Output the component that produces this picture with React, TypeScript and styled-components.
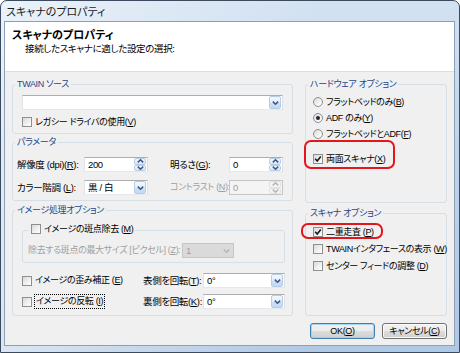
import React from 'react'
import styled, { createGlobalStyle } from 'styled-components'

const GlobalStyle = createGlobalStyle`
	html, body {
		margin: 0;
		padding: 0;
		background: #fff;
	}
	body {
		font-family: "Liberation Sans", "Noto Sans CJK JP", sans-serif;
		font-size: 9px;
		font-feature-settings: "palt";
		letter-spacing: -0.35px;
		color: #000;
	}
	* {
		box-sizing: border-box;
	}
`

// Window chrome
const Window = styled.div`
	width: 460px;
	height: 353px;
	display: flex;
	flex-direction: column;
	padding: 0 4px 6px 3px;
	border: 1px solid #3b4a5c;
	border-radius: 7px 7px 0 0;
	background:
		linear-gradient(90deg, rgba(255, 255, 255, 0.55) 0%, rgba(255, 255, 255, 0.25) 35%, rgba(255, 255, 255, 0) 70%),
		linear-gradient(180deg, #d3e2f2 0%, #c0d5ec 40%, #afc8e4 100%);
`

const TitleBar = styled.div`
	height: 20px;
	display: flex;
	align-items: center;
	padding-left: 2px;
	font-size: 11px;
	letter-spacing: 0;
	color: #1b1b1b;
`

const Client = styled.div`
	flex: 1;
	display: flex;
	flex-direction: column;
	border: 1px solid #8b9fb6;
	background: #f0f0f0;
`

const Header = styled.div`
	height: 50px;
	background: #fff;
	border-bottom: 1px solid #d9dfe6;
	padding: 6px 0 0 7px;
`

const HeaderTitle = styled.div`
	font-size: 11px;
	line-height: 14px;
	font-weight: 700;
	letter-spacing: 0;
`

const HeaderSub = styled.div`
	font-size: 9.5px;
	line-height: 13px;
	padding-left: 13px;
`

const Body = styled.div`
	display: flex;
	gap: 12px;
	padding: 6px 7px 0 7px;
`

const Column = styled.div<{ $w: number }>`
	width: ${p => p.$w}px;
	display: flex;
	flex-direction: column;
`

// Group boxes
const Group = styled.fieldset<{ $h: number; $mt?: number; $ml?: number; $w?: number }>`
	margin: ${p => p.$mt ?? 0}px 0 0 ${p => p.$ml ?? 0}px;
	padding: 0;
	min-width: 0;
	width: ${p => (p.$w ? `${p.$w}px` : 'auto')};
	height: ${p => p.$h}px;
	border: 1px solid #d5dfe5;
	border-radius: 3px;
`

const Caption = styled.legend<{ $ml?: number }>`
	margin-left: ${p => p.$ml ?? 2}px;
	padding: 0 2px;
	font-size: 9px;
	line-height: 13px;
	color: #26468a;
`

// Controls
const Field = styled.div<{ $w?: number; $disabled?: boolean; $fill?: boolean; $ml?: number; $mt?: number }>`
	display: flex;
	align-items: stretch;
	width: ${p => (p.$w ? `${p.$w}px` : '100%')};
	height: 15px;
	margin: ${p => p.$mt ?? 0}px 0 0 ${p => p.$ml ?? 0}px;
	border: 1px solid;
	border-color: ${p => (p.$disabled ? '#c5c5c5' : '#abadb3 #dbdfe6 #e3e9ef #e2e3ea')};
	background: ${p => (p.$fill ? '#dadada' : p.$disabled ? '#f4f4f4' : '#fff')};
	color: ${p => (p.$disabled ? '#a0a0a0' : '#000')};
`

const FieldText = styled.span`
	flex: 1;
	padding-left: 3px;
	font-size: 9.5px;
	line-height: 13px;
	white-space: nowrap;
	overflow: hidden;
`

const DropButton = styled.span<{ $disabled?: boolean }>`
	width: 12px;
	margin: 0 1px 0 0;
	display: flex;
	align-items: center;
	justify-content: center;
	border: 1px solid ${p => (p.$disabled ? 'transparent' : '#b7cde6')};
	border-radius: 2px;
	background: ${p => (p.$disabled ? 'transparent' : 'linear-gradient(180deg, #f4f8fd 0%, #e2edf9 50%, #cfe0f3 51%, #c4d9f0 100%)')};
`

const SpinBox = styled.span`
	width: 12px;
	margin-right: 1px;
	display: flex;
	flex-direction: column;
`

const SpinHalf = styled.span<{ $disabled?: boolean }>`
	flex: 1;
	display: flex;
	align-items: center;
	justify-content: center;
	border: 1px solid ${p => (p.$disabled ? '#e2e2e2' : '#b7cde6')};
	border-radius: 2px;
	background: ${p => (p.$disabled ? '#f4f4f4' : 'linear-gradient(180deg, #f4f8fd 0%, #d6e5f5 100%)')};
`

const Chevron = ({ up, disabled }: { up?: boolean; disabled?: boolean }) => (
	<svg width="7" height="4" viewBox="0 0 7 4">
		<path
			d={up ? 'M0.8 3.4 L3.5 0.8 L6.2 3.4' : 'M0.8 0.6 L3.5 3.2 L6.2 0.6'}
			fill="none"
			stroke={disabled ? '#b5b5b5' : '#3c5585'}
			strokeWidth="1.5"
		/>
	</svg>
)

const ComboBox = ({ value, w, ml, mt, disabled, fill }: { value: string; w?: number; ml?: number; mt?: number; disabled?: boolean; fill?: boolean }) => (
	<Field $w={w} $ml={ml} $mt={mt} $disabled={disabled} $fill={fill}>
		<FieldText>{value}</FieldText>
		<DropButton $disabled={disabled}>
			<Chevron disabled={disabled} />
		</DropButton>
	</Field>
)

const SpinEdit = ({ value, disabled }: { value: string; disabled?: boolean }) => (
	<Field $disabled={disabled}>
		<FieldText>{value}</FieldText>
		<SpinBox>
			<SpinHalf $disabled={disabled}><Chevron up disabled={disabled} /></SpinHalf>
			<SpinHalf $disabled={disabled}><Chevron disabled={disabled} /></SpinHalf>
		</SpinBox>
	</Field>
)

const OptionRow = styled.div<{ $disabled?: boolean; $mt?: number }>`
	display: inline-flex;
	align-items: center;
	gap: 3px;
	height: 14px;
	margin-top: ${p => p.$mt ?? 0}px;
	line-height: 13px;
	white-space: nowrap;
	color: ${p => (p.$disabled ? '#a0a0a0' : '#000')};
`

const CheckBox = styled.span`
	width: 10px;
	height: 10px;
	flex: none;
	display: inline-flex;
	align-items: center;
	justify-content: center;
	border: 1px solid #8e8f8f;
	background: linear-gradient(135deg, #d8d8d8 0%, #f0f0f0 55%, #fff 100%);
`

const RadioDot = styled.span`
	width: 10px;
	height: 10px;
	flex: none;
	display: inline-flex;
	align-items: center;
	justify-content: center;
	border: 1px solid #8e8f8f;
	border-radius: 50%;
	background: linear-gradient(135deg, #d8d8d8 0%, #f3f3f3 60%, #fff 100%);
`

const Dot = styled.span`
	width: 4px;
	height: 4px;
	border-radius: 50%;
	background: #1d2738;
`

const Check = ({ checked }: { checked?: boolean }) => (
	<CheckBox>
		{checked && (
			<svg width="8" height="8" viewBox="0 0 8 8">
				<path d="M1.2 3.8 L3.2 6 L6.8 1.4" fill="none" stroke="#1a1a1a" strokeWidth="1.6" />
			</svg>
		)}
	</CheckBox>
)

const Radio = ({ on }: { on?: boolean }) => <RadioDot>{on && <Dot />}</RadioDot>

const Focus = styled.span`
	outline: 1px dotted #000;
	padding: 0 1px;
`

const Label = styled.span<{ $disabled?: boolean; $wide?: boolean }>`
	font-size: ${p => (p.$wide ? 9.5 : 9)}px;
	line-height: 13px;
	white-space: nowrap;
	color: ${p => (p.$disabled ? '#a0a0a0' : '#000')};
`

// Group contents
const TwainBody = styled.div`
	display: flex;
	flex-direction: column;
	gap: 5px;
	padding: 4px 0 0 9px;
`

const ParamGrid = styled.div`
	display: grid;
	grid-template-columns: 67px 64px 22px 59px 54px;
	grid-auto-rows: 15px;
	row-gap: 8px;
	align-items: center;
	margin: 8px 0 0 4px;
`

const SpeckleRow = styled.div`
	display: grid;
	grid-template-columns: 154px 52px;
	align-items: center;
	height: 14px;
	margin: 5px 0 0 5px;
`

const RotateGrid = styled.div`
	display: grid;
	grid-template-columns: 121px 60px 82px;
	grid-auto-rows: 15px;
	row-gap: 6px;
	align-items: center;
	margin: 10px 0 0 9px;
`

const OptionList = styled.div<{ $gap: number; $mt: number }>`
	display: flex;
	flex-direction: column;
	align-items: flex-start;
	gap: ${p => p.$gap}px;
	margin: ${p => p.$mt}px 0 0 7px;
`

// red annotation drawn over the screenshot
const Marked = styled.div<{ $l: number; $t: number; $r: number; $b: number }>`
	position: relative;
	display: inline-flex;
	&::after {
		content: '';
		position: absolute;
		left: -${p => p.$l}px;
		top: -${p => p.$t}px;
		right: -${p => p.$r}px;
		bottom: -${p => p.$b}px;
		border: 2px solid #e3161d;
		border-radius: 7px;
		pointer-events: none;
	}
`

const ButtonBar = styled.div`
	display: flex;
	justify-content: flex-end;
	gap: 7px;
	padding: 7px 7px 0 0;
`

const PushButton = styled.button<{ $default?: boolean }>`
	width: 65px;
	height: 16px;
	padding: 0;
	font-family: inherit;
	font-size: 9px;
	line-height: 14px;
	letter-spacing: -0.35px;
	font-feature-settings: "palt";
	color: #000;
	border: 1px solid ${p => (p.$default ? '#3c7fb1' : '#707070')};
	border-radius: 3px;
	background: linear-gradient(180deg, #f2f2f2 0%, #ebebeb 48%, #dddddd 52%, #cfcfcf 100%);
	box-shadow: inset 0 0 0 1px ${p => (p.$default ? 'rgba(160, 210, 240, 0.9)' : 'rgba(255, 255, 255, 0.8)')};
`

export default function App() {
	return (
		<>
			<GlobalStyle />
			<Window>
				<TitleBar>スキャナのプロパティ</TitleBar>
				<Client>
					<Header>
						<HeaderTitle>スキャナのプロパティ</HeaderTitle>
						<HeaderSub>接続したスキャナに適した設定の選択:</HeaderSub>
					</Header>
					<Body>
						<Column $w={281}>
							<Group $h={56}>
								<Caption>TWAIN ソース</Caption>
								<TwainBody>
									<ComboBox value="" w={261} />
									<OptionRow>
										<Check />
										<span>レガシー ドライバの使用(<u>V</u>)</span>
									</OptionRow>
								</TwainBody>
							</Group>
							<Group $h={65} $mt={2}>
								<Caption>パラメータ</Caption>
								<ParamGrid>
									<Label $wide>解像度 (dpi)(<u>R</u>):</Label>
									<SpinEdit value="200" />
									<span />
									<Label $wide>明るさ(<u>G</u>):</Label>
									<SpinEdit value="0" />
									<Label $wide>カラー階調 (<u>L</u>):</Label>
									<ComboBox value="黒 / 白" />
									<span />
									<Label $disabled>コントラスト (<u>N</u>):</Label>
									<SpinEdit value="0" disabled />
								</ParamGrid>
							</Group>
							<Group $h={112} $mt={3}>
								<Caption>イメージ処理オプション</Caption>
								<Group $h={41} $mt={5} $ml={9} $w={263}>
									<Caption $ml={6}>
										<OptionRow>
											<Check />
											<span>イメージの斑点除去 (<u>M</u>)</span>
										</OptionRow>
									</Caption>
									<SpeckleRow>
										<Label $disabled>除去する斑点の最大サイズ [ピクセル] (<u>Z</u>):</Label>
										<ComboBox value="1" disabled fill />
									</SpeckleRow>
								</Group>
								<RotateGrid>
									<OptionRow>
										<Check />
										<span>イメージの歪み補正 (<u>E</u>)</span>
									</OptionRow>
									<Label $wide>表側を回転(<u>T</u>):</Label>
									<ComboBox value="0°" />
									<OptionRow>
										<Check />
										<Focus>イメージの反転 (<u>I</u>)</Focus>
									</OptionRow>
									<Label $wide>裏側を回転(<u>K</u>):</Label>
									<ComboBox value="0°" />
								</RotateGrid>
							</Group>
						</Column>
						<Column $w={142}>
							<Group $h={125}>
								<Caption>ハードウェア オプション</Caption>
								<OptionList $gap={2} $mt={4}>
									<OptionRow>
										<Radio />
										<span>フラットベッドのみ(<u>B</u>)</span>
									</OptionRow>
									<OptionRow>
										<Radio on />
										<span>ADF のみ(<u>Y</u>)</span>
									</OptionRow>
									<OptionRow>
										<Radio />
										<span>フラットベッドとADF(<u>F</u>)</span>
									</OptionRow>
									<Marked $l={9} $t={3} $r={10} $b={3}>
										<OptionRow $mt={9}>
											<Check checked />
											<span>両面スキャナ(<u>X</u>)</span>
										</OptionRow>
									</Marked>
								</OptionList>
							</Group>
							<Group $h={109} $mt={4}>
								<Caption>スキャナ オプション</Caption>
								<OptionList $gap={3} $mt={5}>
									<Marked $l={12} $t={2} $r={9} $b={0}>
										<OptionRow>
											<Check checked />
											<span>二重走査 (<u>P</u>)</span>
										</OptionRow>
									</Marked>
									<OptionRow>
										<Check />
										<span>TWAINインタフェースの表示 (<u>W</u>)</span>
									</OptionRow>
									<OptionRow>
										<Check />
										<span>センター フィードの調整 (<u>D</u>)</span>
									</OptionRow>
								</OptionList>
							</Group>
						</Column>
					</Body>
					<ButtonBar>
						<PushButton $default>OK(<u>O</u>)</PushButton>
						<PushButton>キャンセル(<u>C</u>)</PushButton>
					</ButtonBar>
				</Client>
			</Window>
		</>
	)
}
